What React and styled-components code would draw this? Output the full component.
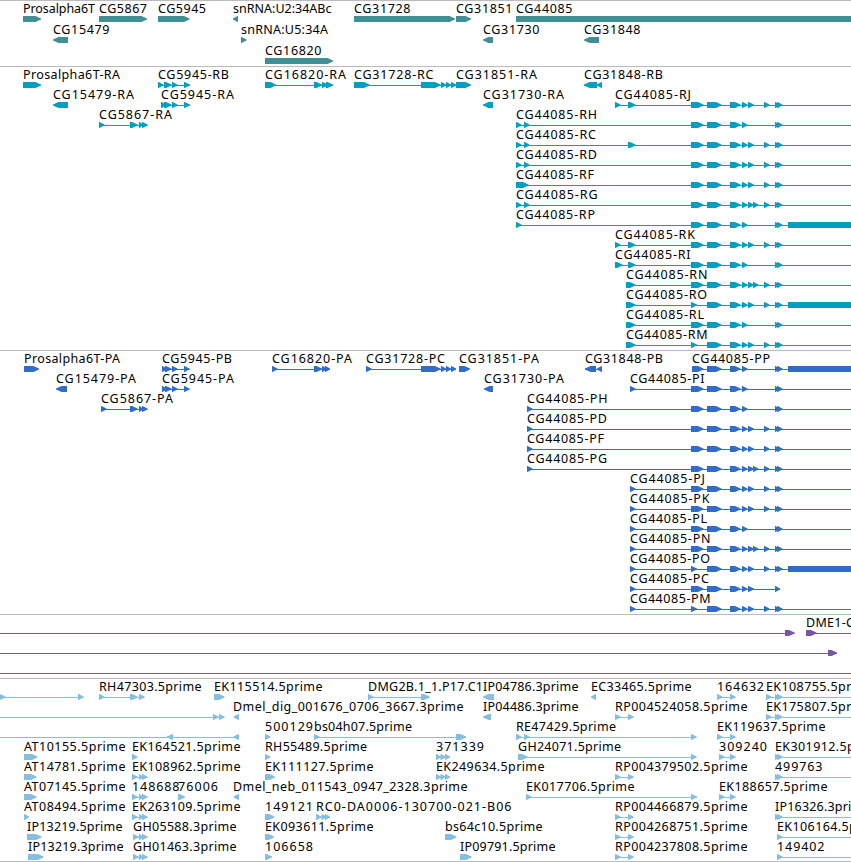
import React from 'react';
import styled, { createGlobalStyle } from 'styled-components';

const GlobalStyle = createGlobalStyle`
  body {
    margin: 0;
    background: #fff;
    overflow: hidden;
  }
`;

const Browser = styled.main`
  display: flex;
  flex-direction: column;
  width: 851px;
  overflow: hidden;
  border-bottom: 1px solid #bbb;
`;

const Track = styled.section`
  display: flex;
  flex-direction: column;
  border-top: 1px solid #bbb;
  padding-bottom: ${props => props.$gap}px;
  color: ${props => props.$color};
`;

// the blocks reach one pixel below their lane, so it must not clip them
const Lane = styled.svg`
  display: block;
  width: 851px;
  height: ${props => props.$height}px;
  overflow: visible;
  fill: currentColor;
`;

const Label = styled.text`
  fill: #000;
  font-family: 'Noto Sans', 'DejaVu Sans', sans-serif;
  font-size: 12.5px;
`;

// everything that runs past the right edge ends here
const EDGE = 860;

// exons that the CG44085 isoforms share
const A = [691, 703.5];
const A_SHORT = [691, 697];
const B = [707, 721.5];
const C = [730, 740.5];
const D1 = [742, 747.5];
const D2 = [748, 754];
const D3 = [753, 758.5];
const E = [764, 769.5];
const F = [[775, 779], [777, 782.5]];
const TAIL = [788, EDGE];

const SHORT = [A, B, C, D1, ...F];
const LONG = [A, B, C, D1, D2, E, ...F];
const FULL = [A, B, C, D1, D2, D3, E, ...F];
const LATE = [A_SHORT, B, C, D1, D2, E, ...F];

// label, x of the label, x where the label ends, exons, and what differs
const f = (label, x, end, exons, more = {}) => ({ label, x, end, exons, ...more });
const rev = { reverse: true };
const on = { to: EDGE };

const START_516 = [[516, 521.5], [524, 529.5]];
const START_615 = [[615, 620.5], [628, 635.5]];
const START_626 = [626, 635.5];
const START_527 = [527, 532.5];
const START_630 = [630, 635.5];
const PAIR_139 = [[139, 143], [142, 147.5]];
const END_31728 = [[421, 440.5], [441, 446], [446, 451], [451, 456]];

const genes = [
    [
        f('Prosalpha6T', 23, 95.5, [[23, 41]]),
        f('CG5867', 99, 147.5, [[99, 147]]),
        f('CG5945', 158, 206.5, [[158, 189.5]]),
        f('snRNA:U2:34ABc', 233, 332, [[233, 238]], rev),
        f('CG31728', 354, 411, [[354, 455]]),
        f('CG31851', 456, 513, [[456, 471]]),
        f('CG44085', 516, 573, [[516, EDGE]]),
    ],
    [
        f('CG15479', 53, 110, [[53, 68]], rev),
        f('snRNA:U5:34A', 241, 328.5, [[241, 246.5]]),
        f('CG31730', 483, 540, [[483, 493]], rev),
        f('CG31848', 584, 641, [[584, 599]], rev),
    ],
    [f('CG16820', 265, 322, [[265, 333]])],
];

const transcripts = [
    [
        f('Prosalpha6T-RA', 23, 120.5, [[23, 41]]),
        f('CG5945-RB', 158, 229.5, [[158, 163.5], [164, 171.5], [172, 177.5], [184, 190]]),
        f('CG16820-RA', 265, 346.5, [[265, 276], [314, 322], [322, 328], [326, 333]]),
        f('CG31728-RC', 354, 434, [[354, 369.5], ...END_31728]),
        f('CG31851-RA', 456, 537.5, [[456, 471]]),
        f('CG31848-RB', 584, 663.5, [[584, 597], [597, 602]], rev),
    ],
    [
        f('CG15479-RA', 53, 134.5, [[53, 68]], rev),
        f('CG5945-RA', 161, 234.5, [[161, 166], [164, 171.5], [172, 177.5], [184, 190]]),
        f('CG31730-RA', 483, 564.5, [[483, 493]], rev),
        f('CG44085-RJ', 615, 691.5, [...START_615, ...LONG], on),
    ],
    [
        f('CG5867-RA', 99, 172.5, [[99, 104.5], [130, 137.5], ...PAIR_139]),
        f('CG44085-RH', 516, 597.5, [...START_516, ...SHORT], on),
    ],
    [f('CG44085-RC', 516, 596.5, [...START_516, [628, 635.5], ...LONG], on)],
    [f('CG44085-RD', 516, 597.5, [...START_516, ...LONG], on)],
    [f('CG44085-RF', 516, 594.5, [[516, 528.5], ...LONG], on)],
    [f('CG44085-RG', 516, 598, [...START_516, ...FULL], on)],
    [f('CG44085-RP', 516, 595.5, [[516, 521.5], ...SHORT, TAIL])],
    [f('CG44085-RK', 615, 695.5, [...START_615, ...LONG], on)],
    [f('CG44085-RI', 615, 691, [[615, 622.5], [628, 635.5], ...SHORT], on)],
    [f('CG44085-RN', 626, 708, [START_626, ...FULL], on)],
    [f('CG44085-RO', 626, 707.5, [START_626, ...LATE, TAIL])],
    [f('CG44085-RL', 626, 704.5, [START_626, ...SHORT], on)],
    [f('CG44085-RM', 626, 708, [START_626, ...LATE], on)],
];

const proteins = [
    [
        f('Prosalpha6T-PA', 24, 120.5, [[24, 39]]),
        f('CG5945-PB', 162, 232.5, [[162, 167], [165, 171.5], [172, 177.5], [184, 189.5]]),
        f('CG16820-PA', 272, 352.5, [[272, 277.5], [314, 322], [322, 327], [325, 330]]),
        f('CG31728-PC', 366, 445.5, [[366, 371.5], ...END_31728]),
        f('CG31851-PA', 459, 539.5, [[459, 470]]),
        f('CG31848-PB', 585, 663.5, [[585, 596], [597, 602]], rev),
        f('CG44085-PP', 692, 770.5, [[692, 703.5], B, C, D1, ...F, TAIL]),
    ],
    [
        f('CG15479-PA', 56, 136.5, [[56, 67]], rev),
        f('CG5945-PA', 162, 234.5, [[162, 167], [165, 171.5], [172, 177.5], [184, 189.5]]),
        f('CG31730-PA', 484, 564.5, [[484, 493]], rev),
        f('CG44085-PI', 630, 705, [START_630, ...SHORT], on),
    ],
    [
        f('CG5867-PA', 101, 173.5, [[101, 106.5], [130, 137.5], ...PAIR_139]),
        f('CG44085-PH', 527, 608, [START_527, ...SHORT], on),
    ],
    [f('CG44085-PD', 527, 607.5, [START_527, ...LONG], on)],
    [f('CG44085-PF', 527, 604.5, [START_527, ...LONG], on)],
    [f('CG44085-PG', 527, 607.5, [START_527, ...FULL], on)],
    [f('CG44085-PJ', 630, 705.5, [START_630, ...LONG], on)],
    [f('CG44085-PK', 630, 710, [START_630, ...LONG], on)],
    [f('CG44085-PL', 630, 707.5, [START_630, ...SHORT], on)],
    [f('CG44085-PN', 630, 711, [START_630, ...FULL], on)],
    [f('CG44085-PO', 630, 710.5, [START_630, ...LATE, TAIL])],
    [f('CG44085-PC', 630, 709.5, [START_630, A, B, C, D1, D2, [775, 780]])],
    [f('CG44085-PM', 630, 711, [START_630, ...LATE], on)],
];

const predictions = [
    [
        f('', 0, 0, [[785, 794.5]], { from: 0 }),
        f('DME1-C', 806, 854.5, [[806, 816.5]], on),
    ],
    [f('', 0, 0, [[828, 837]], { from: 0 })],
    [f('', 0, 0, [], { from: 0, to: EDGE })],
];

const PAIR_615 = [[615, 620.5], [628, 633.5]];
const PAIR_717 = [[717, 722.5], [730, 735.5]];
const PAIR_719 = [[719, 724.5], [730, 735.5]];
const TRIPLE_132 = [[132, 137.5], ...PAIR_139];
const TRIPLE_133 = [[133, 138.5], ...PAIR_139];
const TRIPLE_436 = [[436, 441], [440.5, 445.5], [445, 450]];

const ests = [
    [
        f('', 0, 0, [[-3, 5.5], [78, 83.5]]),
        f('RH47303.5prime', 99, 202, [[99, 104.5], [130, 137.5], [139, 144.5]]),
        f('EK115514.5prime', 214, 323, [[214, 224.5]]),
        f('DMG2B.1_1.P17.C1', 368, 483.5, [[368, 373.5], [421, 429.5]]),
        f('IP04786.3prime', 483, 579, [[483, 494]], rev),
        f('EC33465.5prime', 591, 692, [[591, 596]], rev),
        f('164632', 717, 764.5, PAIR_717),
        f('EK108755.5prime', 766, 875, [[766, 771.5], ...F], on),
    ],
    [
        f('', 0, 0, [[213, 218.5], [219, 224.5]], { from: 0 }),
        f('Dmel_dig_001676_0706_3667.3prime', 233, 464, [[233.5, 239]], rev),
        f('IP04486.3prime', 483, 579, [[483, 491]], rev),
        f('RP004524058.5prime', 615, 748, PAIR_615),
        f('EK175807.5prime', 766, 875, [[766, 771.5], ...F], on),
    ],
    [
        f('', 0, 0, [[167, 173], [233.5, 239]], { from: 0, reverse: true }),
        f('500129', 265, 313.5, [[265, 270.5]]),
        f('bs04h07.5prime', 314, 412.5, [[314, 319.5], [456, 466]]),
        f('RE47429.5prime', 516, 616.5, [...START_516, [691, 696.5]]),
        f('EK119637.5prime', 717, 826, PAIR_717),
    ],
    [
        f('AT10155.5prime', 24, 126, [[24, 37.5]]),
        f('EK164521.5prime', 132, 241, [[132, 137.5]]),
        f('RH55489.5prime', 265, 367.5, [[265, 270.5]]),
        f('371339', 436, 484.5, TRIPLE_436),
        f('GH24071.5prime', 518, 621.5, [[518, 527.5], [691, 696.5]]),
        f('309240', 719, 767.5, PAIR_719),
        f('EK301912.5prime', 775, 884, F, on),
    ],
    [
        f('AT14781.5prime', 24, 126, [[24, 36.5]]),
        f('EK108962.5prime', 132, 241, TRIPLE_132),
        f('EK111127.5prime', 265, 374, [[265, 275]]),
        f('EK249634.5prime', 436, 545, TRIPLE_436),
        f('RP004379502.5prime', 615, 748, PAIR_615),
        f('499763', 775, 823, F, on),
    ],
    [
        f('AT07145.5prime', 24, 126, [[24, 36.5]]),
        f('148688', 132, 180, TRIPLE_132),
        f('76006', 178, 218.5, [[178, 185]]),
        f('Dmel_neb_011543_0947_2328.3prime', 233, 468, [[233.5, 239]], rev),
        f('EK017706.5prime', 526, 635, [[526, 531.5], [691, 697]]),
        f('EK188657.5prime', 719, 828, PAIR_719),
    ],
    [
        f('AT08494.5prime', 24, 126, [[24, 29]]),
        f('EK263109.5prime', 132, 241, TRIPLE_132),
        f('149121', 265, 313.5, [[265, 274.5]]),
        f('RC0-DA0006-130700-021-B06', 316, 512, [[316, 321.5], [321.5, 326.5], [325, 330]]),
        f('RP004466879.5prime', 615, 748, PAIR_615),
        f('IP16326.3prime', 775, 871, F, on),
    ],
    [
        f('IP13219.5prime', 27, 123, [[27, 41.5]]),
        f('GH05588.3prime', 133, 237, TRIPLE_133),
        f('EK093611.5prime', 265, 374, [[265, 274]]),
        f('bs64c10.5prime', 445, 543, [[445, 456.5]]),
        f('RP004268751.5prime', 615, 748, PAIR_615),
        f('EK106164.5prime', 777, 886, [[777, 782.5]], on),
    ],
    [
        f('IP13219.3prime', 28, 124, [[28, 43.5]]),
        f('GH01463.3prime', 133, 237, TRIPLE_133),
        f('106658', 265, 313.5, [[265, 272]]),
        f('IP09791.5prime', 460, 556, [[460, 471.5]]),
        f('RP004237808.5prime', 615, 748, PAIR_615),
        f('149402', 777, 825, [[777, 782.5]], on),
    ],
];

const tracks = [
    { name: 'genes', color: '#3f8f94', lanes: genes, laneHeight: 21, gap: 2 },
    { name: 'transcripts', color: '#009fc1', lanes: transcripts, laneHeight: 20, gap: 3 },
    { name: 'proteins', color: '#316ccd', lanes: proteins, laneHeight: 20, gap: 3 },
    { name: 'predictions', color: '#7656a5', lanes: predictions, laneHeight: 20, gap: 3 },
    { name: 'ests', color: '#87bddd', lanes: ests, laneHeight: 20, gap: 2 },
];

// a block six pixels high whose last pixels taper to a point
const Exon = ({ start, end, reverse }) => {
    const head = Math.min(end - start, 6) - 0.5;
    if (reverse) {
        return <path d={`M${end} 15H${start + head}L${start} 17.5V18.5L${start + head} 21H${end}Z`} />;
    }
    return <path d={`M${start} 15H${end - head}L${end} 17.5V18.5L${end - head} 21H${start}Z`} />;
};

const Feature = ({ label, x, end, exons, from, to, reverse }) => {
    const first = from ?? exons[0][0];
    const last = to ?? exons[exons.length - 1][1];
    // a single block needs no line behind it, it would blunt the tip
    const hasLine = exons.length !== 1 || from !== undefined || to !== undefined;
    return (
        <g>
            {hasLine && <rect x={first} y={18} width={last - first} height={1} />}
            {exons.map(([a, b]) => (
                <Exon key={a} start={a} end={b} reverse={reverse} />
            ))}
            {label && (
                <Label x={x} y={12} textLength={end - x - 0.5}>{label}</Label>
            )}
        </g>
    );
};

const App = () => (
    <>
        <GlobalStyle />
        <Browser>
            {tracks.map(track => (
                <Track key={track.name} $color={track.color} $gap={track.gap}>
                    {track.lanes.map((lane, i) => (
                        <Lane key={i} $height={track.laneHeight}>
                            {lane.map((feature, j) => (
                                <Feature key={j} {...feature} />
                            ))}
                        </Lane>
                    ))}
                </Track>
            ))}
        </Browser>
    </>
);

export default App;
